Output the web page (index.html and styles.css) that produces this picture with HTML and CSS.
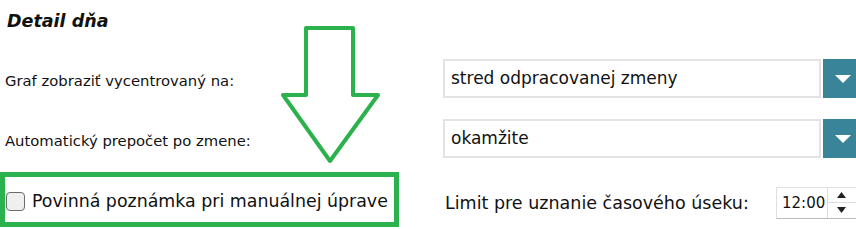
FILE: index.html
```html
<!doctype html>
<html>
    <head>
        <meta charset=utf-8>
        <title>Detail dňa</title>
        <link rel="stylesheet" href="styles.css">
    </head>
    <body>
        <div class="page">
            <h2 class="title">Detail dňa</h2>

            <div class="row">
                <label class="lbl">Graf zobraziť vycentrovaný na:</label>
                <div class="select">
                    <span class="value">stred odpracovanej zmeny</span>
                    <span class="btn">
                        <svg width="16" height="8" viewBox="0 0 16 8"><path d="M0 0H16L8 8Z" fill="#fff"/></svg>
                    </span>
                </div>
            </div>

            <div class="row">
                <label class="lbl">Automatický prepočet po zmene:</label>
                <div class="select">
                    <span class="value">okamžite</span>
                    <span class="btn">
                        <svg width="16" height="8" viewBox="0 0 16 8"><path d="M0 0H16L8 8Z" fill="#fff"/></svg>
                    </span>
                </div>
            </div>

            <div class="row row-last">
                <label class="check-row">
                    <span class="cb"></span>
                    <span>Povinná poznámka pri manuálnej úprave</span>
                </label>
                <div class="limit">
                    <span class="limit-lbl">Limit pre uznanie časového úseku:</span>
                    <div class="time">
                        <span class="time-val">12:00</span>
                        <div class="spin">
                            <span><svg width="9" height="6" viewBox="0 0 9 6"><path d="M0 6H9L4.5 0Z" fill="#222"/></svg></span>
                            <span><svg width="9" height="6" viewBox="0 0 9 6"><path d="M0 0H9L4.5 6Z" fill="#222"/></svg></span>
                        </div>
                    </div>
                </div>
            </div>

            <!-- annotation arrow -->
            <svg class="arrow" width="100" height="140" viewBox="0 0 100 140">
                <path d="M24 8H71V75H96L48 141L1 75H24Z" fill="none" stroke="#2bb24c" stroke-width="4" stroke-linejoin="round"/>
            </svg>
        </div>
    </body>
</html>
```

FILE: styles.css
```css
* {
  padding: 0;
  margin: 0;
  box-sizing: border-box;
}

body {
  font-family: "DejaVu Sans", sans-serif;
  color: #111;
  background: #fff;
  width: 856px;
  height: 229px;
  overflow: hidden;
}

.page {
  position: relative;
  height: 229px;
}

.title {
  font-size: 17.5px;
  font-weight: bold;
  font-style: italic;
  line-height: 22px;
  padding: 10px 0 0 7px;
  height: 59px;
}

.row {
  display: flex;
  height: 39px;
  margin-bottom: 21px;
}

.row > * {
  flex-shrink: 0;
}

.row-last {
  height: 55px;
  margin-top: -7px;
  margin-bottom: 0;
}

.lbl {
  width: 443px;
  font-size: 14.8px;
  padding-left: 5px;
  align-self: center;
  padding-top: 3px;
}

.select {
  display: flex;
  width: 420px;
  height: 39px;
}

.select .value {
  flex: 1;
  border: 2px solid #e3e3e3;
  font-size: 17px;
  line-height: 35px;
  padding-left: 6px;
}

.select .btn {
  width: 40px;
  margin-left: 2px;
  background: #3a8499;
  display: flex;
  align-items: center;
  padding-left: 12px;
}

.check-row {
  display: flex;
  align-items: center;
  width: 399px;
  border: 5px solid #2bb24c;
  font-size: 17.4px;
  padding: 3px 0 0 1px;
  gap: 7px;
}

.cb {
  width: 19px;
  height: 19px;
  border: 1px solid #6b6b6b;
  border-radius: 4px;
  background: #efefef;
}

.limit {
  display: flex;
  align-items: center;
  padding-left: 46px;
  padding-top: 6px;
  font-size: 17.5px;
}

.limit-lbl {
  width: 331px;
}

.time {
  display: flex;
  height: 32px;
  width: 82px;
  border: 1px solid #e0e0e0;
  border-bottom-color: #bbb;
}

.time-val {
  font-size: 15px;
  line-height: 30px;
  padding-left: 5px;
  width: 50px;
}

.spin {
  display: flex;
  flex-direction: column;
  border-left: 1px solid #ddd;
  width: 30px;
}

.spin span {
  flex: 1;
  display: flex;
  align-items: center;
  justify-content: center;
  padding-right: 2px;
}

.spin span:first-child {
  border-bottom: 1px solid #ddd;
}

.arrow {
  position: absolute;
  left: 282px;
  top: 20px;
  overflow: visible;
}
```
